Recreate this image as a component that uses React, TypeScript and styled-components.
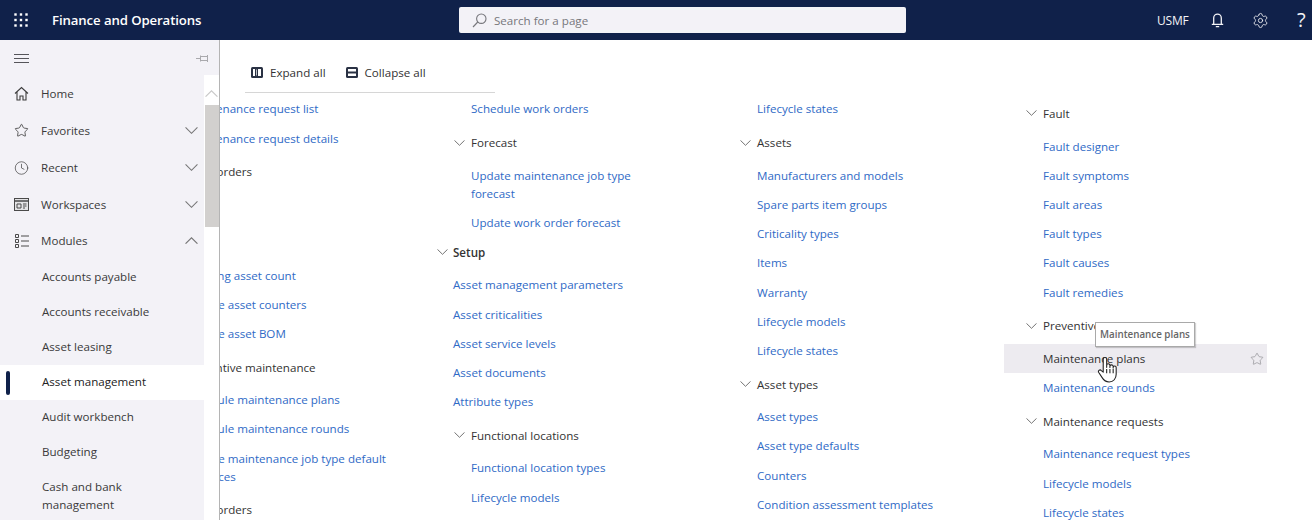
import styled, { createGlobalStyle } from 'styled-components';
import { Clock, Settings, Star } from 'lucide-react';
import type { ReactNode } from 'react';

const GlobalStyle = createGlobalStyle`
  html, body {
    margin: 0;
    height: 100%;
    overflow: hidden;
    background: #fff;
    font-family: "Open Sans", "Noto Sans", Arial, sans-serif;
    font-size: 11.6px;
  }
  * { box-sizing: border-box; }
`;

const Page = styled.div`
  display: flex;
  flex-direction: column;
  width: 1312px;
  height: 520px;
  overflow: hidden;
`;

/* top bar */
const TopBar = styled.header`
  display: flex;
  align-items: center;
  flex: 0 0 40px;
  height: 40px;
  padding-left: 14px;
  background: #10214a;
  color: #fff;
`;

const AppName = styled.div`
  margin-left: 24px;
  width: 407px;
  font-size: 13.2px;
  font-weight: 600;
  letter-spacing: -0.1px;
`;

const SearchBox = styled.div`
  display: flex;
  align-items: center;
  gap: 7px;
  width: 447px;
  height: 26px;
  padding-left: 13px;
  border-radius: 2px;
  background: #f3f2f7;
  color: #77777c;
  font-size: 11.6px;
`;

const TopActions = styled.div`
  display: flex;
  align-items: center;
  margin-left: 251px;
  color: #f3f3f6;
`;

const Company = styled.span`
  width: 53px;
  font-size: 12px;
  letter-spacing: -0.2px;
`;

const TopIcon = styled.span<{ $width: number }>`
  display: flex;
  width: ${(p) => p.$width}px;
`;

const Help = styled.span`
  font-size: 20px;
  line-height: 1;
`;

/* body */
const Body = styled.div`
  display: flex;
  flex: 1;
  min-height: 0;
`;

const Sidebar = styled.nav`
  display: flex;
  flex-direction: column;
  flex: 0 0 220px;
  border-right: 1px solid #b4b4b4;
  background: #fff;
`;

const SideHead = styled.div`
  display: flex;
  align-items: center;
  justify-content: space-between;
  flex: 0 0 35px;
  padding: 2px 10px 0 14px;
  background: #f3f2f7;
  color: #55555a;
`;

const SideBody = styled.div`
  display: flex;
  flex: 1;
  min-height: 0;
`;

const NavList = styled.ul`
  flex: 0 0 204px;
  margin: 0;
  padding: 0;
  list-style: none;
  background: #f3f2f7;
  color: #3a3a3a;
  overflow: hidden;
`;

const NavRow = styled.li`
  display: flex;
  align-items: center;
  height: 37px;
  padding: 0 6px 0 14px;
  font-size: 11.6px;

  &:nth-child(5) {
    padding-bottom: 2px;
  }
`;

const NavIcon = styled.span`
  display: flex;
  justify-content: center;
  width: 15px;
  margin-right: 12px;
  color: #3c3c3c;
`;

const NavLabel = styled.span`
  flex: 1;
`;

const ModuleRow = styled.li<{ $active?: boolean; $tall?: boolean }>`
  position: relative;
  display: flex;
  align-items: center;
  height: ${(p) => (p.$tall ? 52 : 35)}px;
  padding: 0 10px ${(p) => (p.$tall ? 0 : 2)}px 42px;
  font-size: 11.6px;
  line-height: 18px;
  color: ${(p) => (p.$active ? '#222' : '#3a3a3a')};
  font-weight: ${(p) => (p.$active ? 500 : 400)};
  background: ${(p) => (p.$active ? '#fff' : 'transparent')};

  ${(p) =>
    p.$active &&
    `&::before {
      content: '';
      position: absolute;
      left: 6px;
      top: 6px;
      width: 4px;
      height: 24px;
      border-radius: 2px;
      background: #10214a;
    }`}
`;

const ScrollTrack = styled.div`
  display: flex;
  flex-direction: column;
  align-items: center;
  flex: 1;
  padding-top: 15px;
  background: #fff;
  color: #c9c9c9;
`;

const ScrollThumb = styled.div`
  width: 14px;
  height: 122px;
  margin-top: 8px;
  background: #d2d0ce;
`;

/* main area */
const Main = styled.main`
  flex: 1;
  min-width: 0;
  overflow: hidden;
`;

const Toolbar = styled.div`
  display: flex;
  align-items: center;
  width: 250px;
  height: 53px;
  margin-left: 25px;
  padding: 12px 0 0 6px;
  border-bottom: 1px solid #d6d6d6;
`;

const ToolButton = styled.button`
  display: flex;
  align-items: center;
  gap: 7px;
  margin-right: 20px;
  padding: 0;
  border: 0;
  background: none;
  color: #333;
  font: inherit;
  font-size: 11.6px;
  white-space: nowrap;
`;

const Columns = styled.div`
  display: grid;
  grid-template-columns: repeat(4, 286px);
  margin: 1.8px 0 0 -53px;
`;

const Column = styled.div`
  min-width: 0;
`;

const Heading = styled.div<{ $depth: number; $strong?: boolean }>`
  display: flex;
  align-items: center;
  gap: ${(p) => (p.$depth ? 6 : 5)}px;
  height: 29.2px;
  margin: ${(p) => (p.$strong ? 0 : 4)}px 0 4px ${(p) => (p.$depth ? 0 : -16)}px;
  padding-left: ${(p) => (p.$depth ? 1 : 0)}px;
  color: #333;
  font-size: 11.6px;
  font-weight: ${(p) => (p.$strong ? 600 : 400)};
  white-space: nowrap;
`;

const PageLink = styled.a<{ $depth: number }>`
  display: block;
  padding: 5.6px 0 5.6px ${(p) => (p.$depth ? 18 : 0)}px;
  color: #2f6ac6;
  font-size: 11.6px;
  line-height: 18px;
  max-width: ${(p) => (p.$depth ? 223 : 205)}px;
`;

const HoverLink = styled.a`
  position: relative;
  display: block;
  width: 263px;
  margin-left: -21px;
  padding: 5.6px 0 5.6px 39px;
  background: #edebf0;
  color: #323232;
  font-size: 11.6px;
  line-height: 18px;
`;

const PinStar = styled.span`
  position: absolute;
  right: 3px;
  top: 8px;
  display: flex;
  color: #8f8f94;
`;

const Tooltip = styled.div`
  position: absolute;
  left: 91px;
  top: -22px;
  padding: 4px 4px;
  border: 1px solid #a9a9a9;
  background: #fff;
  box-shadow: 1px 1px 1px rgba(0, 0, 0, 0.18);
  color: #666;
  font-size: 9.8px;
  font-weight: 600;
  line-height: 15px;
  white-space: nowrap;
  z-index: 2;
`;

const HandCursor = styled.span`
  position: absolute;
  left: 93px;
  top: 12px;
  display: flex;
  z-index: 3;
`;

const Spacer = styled.div<{ $height: number }>`
  height: ${(p) => p.$height}px;
`;

/* drawn icons */
const Chevron = ({ up, size = 11, color = '#666' }: { up?: boolean; size?: number; color?: string }) => (
  <svg width={size} height={size * 0.55} viewBox="0 0 12 6.6" fill="none" stroke={color} strokeWidth="1">
    <path d={up ? 'M.5 6.2 6 .8l5.5 5.4' : 'M.5.4 6 5.8 11.5.4'} />
  </svg>
);

const Waffle = () => (
  <svg width="14" height="14" viewBox="0 0 14 14" fill="#fff">
    {[1.5, 7, 12.5].flatMap((y) =>
      [1.5, 7, 12.5].map((x) => <rect key={`${x}-${y}`} x={x - 1.2} y={y - 1.2} width="2.4" height="2.4" />),
    )}
  </svg>
);

const Hamburger = () => (
  <svg width="15" height="9" viewBox="0 0 15 9" stroke="currentColor" strokeWidth="1">
    <path d="M0 .5h15M0 4.5h15M0 8.5h15" />
  </svg>
);

const Pin = () => (
  <svg width="13" height="9" viewBox="0 0 13 9" fill="none" stroke="#a9a9ad" strokeWidth="1">
    <path d="M0 4.5h4M4.500 1.500v6M4.500 2.500h7v4h-7M11.500 1v7" />
  </svg>
);

const SearchGlass = () => (
  <svg width="15" height="15" viewBox="0 0 15 15" fill="none" stroke="#77777c" strokeWidth="1.1">
    <circle cx="9.3" cy="5.7" r="4.7" />
    <path d="M5.8 9 1 14" />
  </svg>
);

const HomeIcon = () => (
  <svg width="15" height="15" viewBox="0 0 15 15" fill="none" stroke="currentColor" strokeWidth="1.1">
    <path d="M1 7.5 7.5 1.5 14 7.5M3 6v8h3v-4h3v4h3V6" />
  </svg>
);

const BellIcon = () => (
  <svg width="15" height="16" viewBox="0 0 15 16" fill="none" stroke="currentColor" strokeWidth="1.3">
    <path d="M3.7 12V6a3.8 3.8 0 0 1 7.6 0v6M1.8 12.3h11.4M5.8 14.6h3.4" />
  </svg>
);

const WorkspacesIcon = () => (
  <svg width="15" height="13" viewBox="0 0 15 13" fill="none" stroke="#4a4a4a" strokeWidth="1">
    <rect x=".5" y=".5" width="14" height="12" fill="#e4e4e6" />
    <path d="M.5 3h14" strokeWidth="1.5" />
    <path d="M3 6h4v4H3zM9 6h3.5M9 8h3.5M9 10h2" />
  </svg>
);

const ModulesIcon = () => (
  <svg width="14" height="14" viewBox="0 0 14 14" fill="none" stroke="#4a4a4a" strokeWidth="1">
    <path d="M.5.5h3v3h-3zM.5 5.5h3v3h-3zM.5 10.5h3v3h-3zM6 2h8M6 7h8M6 12h8" />
  </svg>
);

const ExpandIcon = ({ collapse }: { collapse?: boolean }) => (
  <svg width="12" height="11" viewBox="0 0 12 11">
    <rect width="12" height="11" rx="1.5" fill="#2a3244" />
    {collapse ? (
      <>
        <rect x="2" y="2" width="8" height="2.5" fill="#fff" />
        <rect x="2" y="6.5" width="8" height="2.5" fill="#fff" />
      </>
    ) : (
      <>
        <rect x="2" y="2" width="2" height="7" fill="#fff" />
        <rect x="7" y="2" width="3" height="7" fill="#fff" />
        <path d="M5.5 2.5v6" stroke="#fff" strokeWidth="0.7" />
      </>
    )}
  </svg>
);

const Hand = () => (
  <svg width="20" height="27" viewBox="0 0 18 25" fill="#fff" stroke="#222" strokeWidth="1" strokeLinejoin="round">
    <path d="M5.5 15V3a1.6 1.6 0 0 1 3.2 0v7.5-1.8a1.500 1.500 0 0 1 3 0v2-1a1.500 1.500 0 0 1 3 0v1.500-.5a1.400 1.400 0 0 1 2.800 0V17c0 4-2.500 7-6.500 7-3.500 0-5-1.500-6.500-4L1.200 15c-.8-1.500 1.300-3 2.600-1.500z" />
    <path d="M8.7 12v4M11.7 12v4M14.7 12v4" fill="none" />
  </svg>
);

type Item =
  | { kind: 'link'; text: string; depth?: number }
  | { kind: 'head'; text: string; depth?: number; strong?: boolean }
  | { kind: 'gap'; height: number }
  | { kind: 'hover'; text: string };

const l = (text: string, depth = 1): Item => ({ kind: 'link', text, depth });
const h = (text: string, depth = 1, strong = false): Item => ({ kind: 'head', text, depth, strong });

const columns: Item[][] = [
  [
    l('Maintenance request list'),
    l('Maintenance request details'),
    h('Work orders'),
    { kind: 'gap', height: 70.6 },
    l('Ongoing asset count'),
    l('Update asset counters'),
    l('Update asset BOM'),
    h('Preventive maintenance'),
    l('Schedule maintenance plans'),
    l('Schedule maintenance rounds'),
    l('Update maintenance job type default instances'),
    h('Work orders'),
  ],
  [
    l('Schedule work orders'),
    h('Forecast'),
    l('Update maintenance job type forecast'),
    l('Update work order forecast'),
    h('Setup', 0, true),
    l('Asset management parameters', 0),
    l('Asset criticalities', 0),
    l('Asset service levels', 0),
    l('Asset documents', 0),
    l('Attribute types', 0),
    h('Functional locations'),
    l('Functional location types'),
    l('Lifecycle models'),
  ],
  [
    l('Lifecycle states'),
    h('Assets'),
    l('Manufacturers and models'),
    l('Spare parts item groups'),
    l('Criticality types'),
    l('Items'),
    l('Warranty'),
    l('Lifecycle models'),
    l('Lifecycle states'),
    h('Asset types'),
    l('Asset types'),
    l('Asset type defaults'),
    l('Counters'),
    l('Condition assessment templates'),
  ],
  [
    h('Fault'),
    l('Fault designer'),
    l('Fault symptoms'),
    l('Fault areas'),
    l('Fault types'),
    l('Fault causes'),
    l('Fault remedies'),
    h('Preventive maintenance'),
    { kind: 'hover', text: 'Maintenance plans' },
    l('Maintenance rounds'),
    h('Maintenance requests'),
    l('Maintenance request types'),
    l('Lifecycle models'),
    l('Lifecycle states'),
  ],
];

const topNav: { label: string; icon: ReactNode; arrow?: 'up' | 'down' }[] = [
  { label: 'Home', icon: <HomeIcon /> },
  { label: 'Favorites', icon: <Star size={15} strokeWidth={1.3} />, arrow: 'down' },
  { label: 'Recent', icon: <Clock size={16} strokeWidth={1.1} />, arrow: 'down' },
  { label: 'Workspaces', icon: <WorkspacesIcon />, arrow: 'down' },
  { label: 'Modules', icon: <ModulesIcon />, arrow: 'up' },
];

const modules = ['Accounts payable', 'Accounts receivable', 'Asset leasing', 'Asset management', 'Audit workbench', 'Budgeting'];

const renderItem = (item: Item, key: number) => {
  switch (item.kind) {
    case 'gap':
      return <Spacer key={key} $height={item.height} />;
    case 'head':
      return (
        <Heading key={key} $depth={item.depth ?? 1} $strong={item.strong}>
          <Chevron />
          <span>{item.text}</span>
        </Heading>
      );
    case 'hover':
      return (
        <HoverLink key={key}>
          {item.text}
          <Tooltip>{item.text}</Tooltip>
          <HandCursor>
            <Hand />
          </HandCursor>
          <PinStar>
            <Star size={14} strokeWidth={1.2} />
          </PinStar>
        </HoverLink>
      );
    default:
      return (
        <PageLink key={key} $depth={item.depth ?? 1}>
          {item.text}
        </PageLink>
      );
  }
};

const App = () => {
  return (
    <Page>
      <GlobalStyle />
      <TopBar>
        <Waffle />
        <AppName>Finance and Operations</AppName>
        <SearchBox>
          <SearchGlass />
          Search for a page
        </SearchBox>
        <TopActions>
          <Company>USMF</Company>
          <TopIcon $width={42}>
            <BellIcon />
          </TopIcon>
          <TopIcon $width={45}>
            <Settings size={17} strokeWidth={1.2} />
          </TopIcon>
          <Help>?</Help>
        </TopActions>
      </TopBar>
      <Body>
        <Sidebar>
          <SideHead>
            <Hamburger />
            <Pin />
          </SideHead>
          <SideBody>
            <NavList>
              {topNav.map((row) => (
                <NavRow key={row.label}>
                  <NavIcon>{row.icon}</NavIcon>
                  <NavLabel>{row.label}</NavLabel>
                  {row.arrow && <Chevron up={row.arrow === 'up'} size={13} color="#777" />}
                </NavRow>
              ))}
              {modules.map((name) => (
                <ModuleRow key={name} $active={name === 'Asset management'}>
                  {name}
                </ModuleRow>
              ))}
              <ModuleRow $tall>Cash and bank management</ModuleRow>
            </NavList>
            <ScrollTrack>
              <Chevron up size={13} color="#c9c9c9" />
              <ScrollThumb />
            </ScrollTrack>
          </SideBody>
        </Sidebar>
        <Main>
          <Toolbar>
            <ToolButton>
              <ExpandIcon />
              Expand all
            </ToolButton>
            <ToolButton>
              <ExpandIcon collapse />
              Collapse all
            </ToolButton>
          </Toolbar>
          <Columns>
            {columns.map((items, i) => (
              <Column key={i}>{items.map(renderItem)}</Column>
            ))}
          </Columns>
        </Main>
      </Body>
    </Page>
  );
};

export default App;
